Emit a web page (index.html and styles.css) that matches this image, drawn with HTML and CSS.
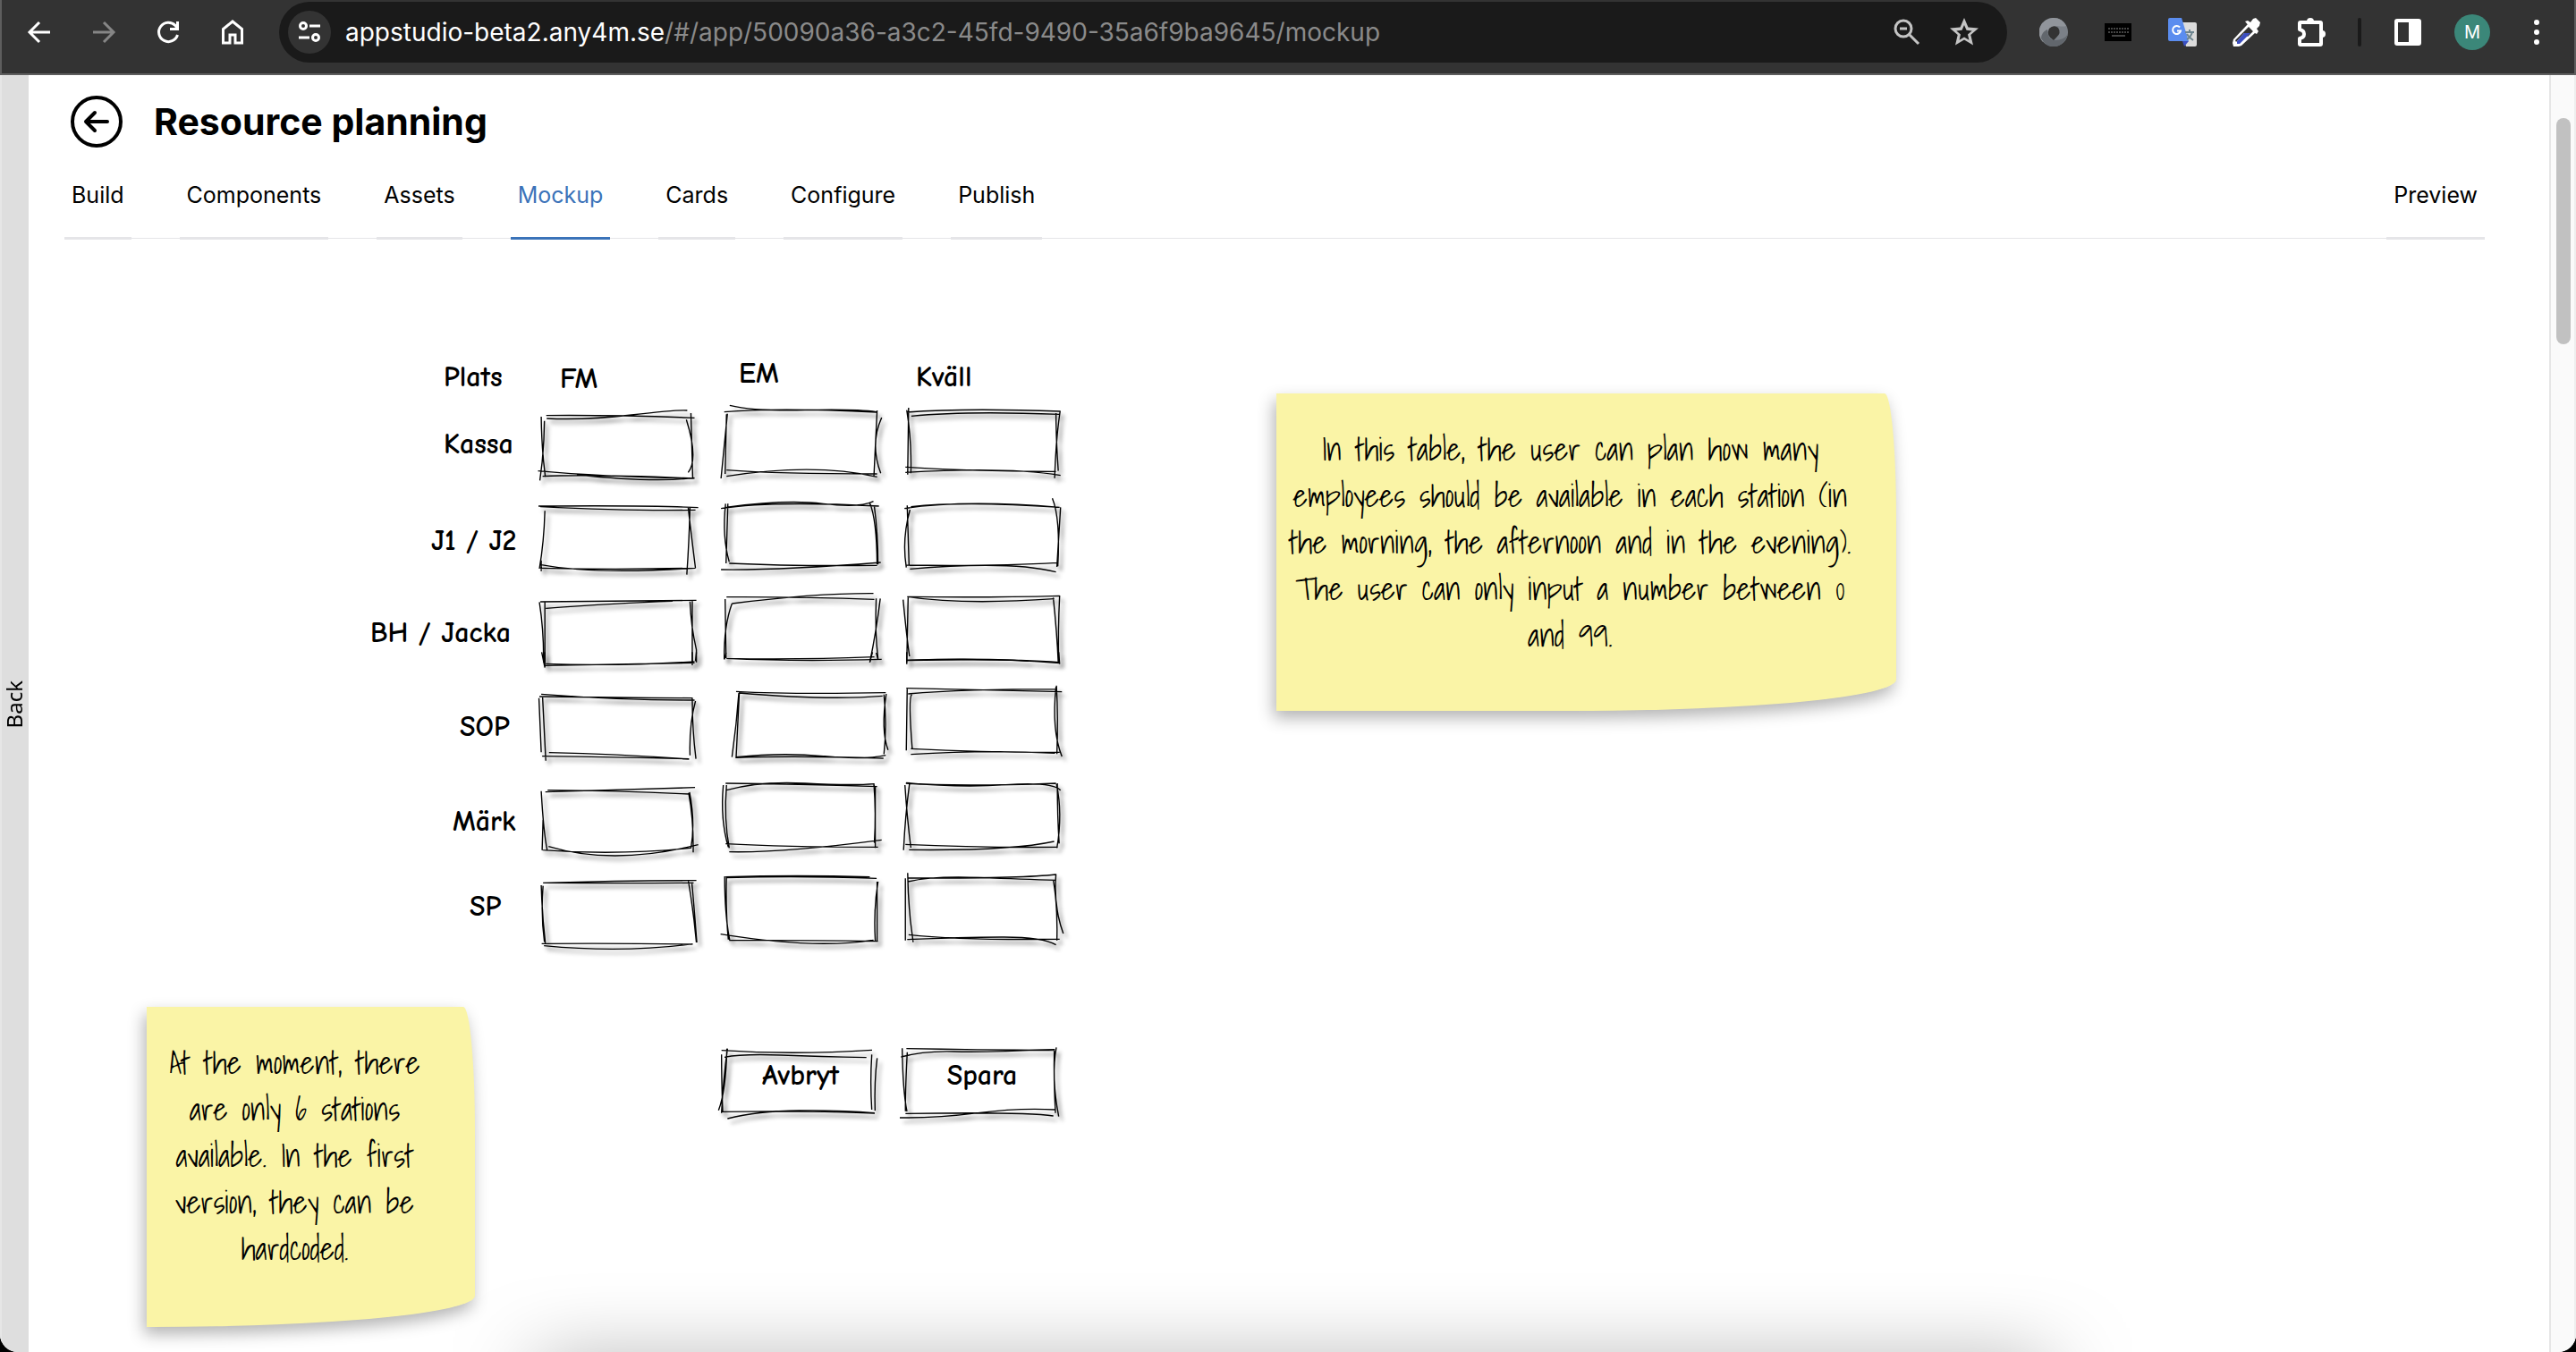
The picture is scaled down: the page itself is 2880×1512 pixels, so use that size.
FILE: index.html
```html
<!DOCTYPE html>
<html lang="en">
<head>
<meta charset="utf-8">
<title>Resource planning</title>
<link rel="stylesheet" href="styles.css">
</head>
<body>
<header class="toolbar">
  <nav class="nav-buttons" aria-label="Browser">
    <button class="icon-btn" aria-label="Back"><svg width="32" height="32" viewBox="0 0 32 32"><path class="line" d="M28 16H6M16 5L5 16l11 11"/></svg></button>
    <button class="icon-btn dim" aria-label="Forward"><svg width="32" height="32" viewBox="0 0 32 32"><path class="line" d="M4 16h22M16 5l11 11-11 11"/></svg></button>
    <button class="icon-btn" aria-label="Reload"><svg width="32" height="32" viewBox="0 0 32 32"><path class="line" d="M26.500 19A10.700 10.700 0 1 1 24 8.500l2 3"/><path class="fill" d="M28 4v10H18v-3h7V4z"/></svg></button>
    <button class="icon-btn" aria-label="Home"><svg width="32" height="32" viewBox="0 0 32 32"><path class="line" d="M5.500 28V12.500L16 4l10.500 8.500V28H19v-9h-6v9z"/></svg></button>
  </nav>
  <div class="address">
    <button class="site-info" aria-label="Site information"><svg width="28" height="28" viewBox="0 0 28 28"><g class="line"><circle cx="7" cy="7" r="3.500"/><path d="M14 7h12M2 20h12"/><circle cx="21" cy="20" r="3.500"/></g></svg></button>
    <p class="url">appstudio-beta2.any4m.se<span>/#/app/50090a36-a3c2-45fd-9490-35a6f9ba9645/mockup</span></p>
    <button class="icon-btn soft" aria-label="Zoom"><svg width="32" height="32" viewBox="0 0 32 32"><g class="line"><circle cx="12" cy="12" r="9"/><path d="M18.500 18.500L29 29M8 12h8"/></g></svg></button>
    <button class="icon-btn soft" aria-label="Bookmark"><svg width="34" height="34" viewBox="0 0 34 34"><path class="fill" fill-rule="evenodd" d="M17 1l4.500 10.500L33 12.500l-8.700 7.600L27 31.500l-10-6-10 6 2.700-11.400L1 12.500l11.500-1zm0 8l-2.500 5.800-6.200.6 4.700 4.100-1.400 6.200 5.400-3.300 5.400 3.300-1.400-6.200 4.700-4.100-6.200-.6z"/></svg></button>
  </div>
  <div class="extensions">
    <button class="icon-btn" aria-label="Ring extension"><svg width="32" height="32" viewBox="0 0 32 32"><circle cx="16" cy="16" r="16" fill="#7b8087"/><path d="M16 0A16 16 0 0 0 4 27Q7 26 9 15q2-6 11-6 8 1 10 0Q26 0 16 0z" fill="#91959b"/><path d="M2 23Q10 36 22 31 30 27 32 18q-4 7-15 7Q9 24 9 13 2 16 2 23z" fill="#62676d"/><path d="M11 12q5-5 10-1 4 6-2 11l-3 3Q7 20 11 12z" fill="#333"/></svg></button>
    <button class="icon-btn" aria-label="Keyboard"><svg width="30" height="20" viewBox="0 0 30 20"><path d="M0 0h30v20H0z" fill="#000"/><path d="M4 6h23M4 10h23" stroke="#444" stroke-width="2" stroke-dasharray="2 1"/><path d="M8 14h15" stroke="#444" stroke-width="2"/></svg></button>
    <button class="icon-btn" aria-label="Translate"><svg width="32" height="32" viewBox="0 0 32 32"><path d="M12 5h18q2 0 2 2v23q0 2-2 2H20z" fill="#dcdcdc"/><path d="M2 0h13l8 26H2q-2 0-2-2V2q0-2 2-2z" fill="#5b8def"/><path d="M16 26h7l-5 6z" fill="#3a50c4"/><path d="M13 10.500a4.500 4.500 0 1 0 1 4h-4" fill="none" stroke="#fff" stroke-width="2"/><path d="M19 16h10M24 13v3M27 16q-2 6-6 8M21 18q2 4 7 7" fill="none" stroke="#6d8590" stroke-width="2"/></svg></button>
    <button class="icon-btn" aria-label="Colour picker"><svg width="32" height="32" viewBox="0 0 32 32"><path d="M17 7l9 9L10 31l-3 1H1l-1-4 1-4z" fill="#fff"/><path d="M18 10l5 5-6 6-4-4-9 10-1-2z" fill="#333"/><path d="M13 17h7L8 29H5v-3z" fill="#3c4fc0"/><path d="M14 4l3-1 3 2 3-4 3-1 5 5-1 4-3 3 2 3-2 3-2-1z" fill="#fff"/></svg></button>
    <button class="icon-btn" aria-label="Extensions"><svg width="36" height="36" viewBox="0 0 36 36"><path fill="none" stroke="#fff" stroke-width="4" stroke-linejoin="round" d="M6 7h22q1 0 1 1v23q0 1-1 1H6q-1 0-1-1v-6q5-1 5-5t-5-5V8q0-1 1-1z"/><path fill="#fff" d="M13 6q0-4 4-4t4 4zM30 16q4 0 4 4t-4 4z"/></svg></button>
    <span class="divider"></span>
    <button class="icon-btn" aria-label="Side panel"><svg width="32" height="32" viewBox="0 0 32 32"><path fill="#fff" fill-rule="evenodd" d="M4 1h24q3 0 3 3v24q0 3-3 3H4q-3 0-3-3V4q0-3 3-3zm1 4v22h12V5z"/></svg></button>
    <button class="avatar">M</button>
    <button class="icon-btn" aria-label="Menu"><svg width="32" height="32" viewBox="0 0 32 32"><g class="fill"><circle cx="16" cy="5" r="3"/><circle cx="16" cy="16" r="3"/><circle cx="16" cy="27" r="3"/></g></svg></button>
  </div>
</header>
<div class="shell">
  <button class="back-strip"><span>Back</span></button>
  <main class="page">
    <div class="title-row">
      <button class="round-back" aria-label="Go back"><svg width="60" height="60" viewBox="0 0 60 60"><g fill="none" stroke="#000" stroke-width="4" stroke-linecap="round" stroke-linejoin="round"><circle cx="30" cy="30" r="27"/><path d="M42 30H18M28 20L18 30l10 10"/></g></svg></button>
      <h1>Resource planning</h1>
    </div>
    <nav class="tabs" aria-label="App sections">
      <a href="#build">Build</a>
      <a href="#components">Components</a>
      <a href="#assets">Assets</a>
      <a href="#mockup" class="active" aria-current="page">Mockup</a>
      <a href="#cards">Cards</a>
      <a href="#configure">Configure</a>
      <a href="#publish">Publish</a>
      <a href="#preview" class="preview">Preview</a>
    </nav>
    <section class="canvas" aria-label="Mockup canvas">
      <svg class="sketch sketch-top" viewBox="0 0 1568 1080" preserveAspectRatio="none" stroke-width="1.400" aria-hidden="true">
        <path d="M413 254Q560 252 738 262M414 264Q500 270 600 252T722 237M402 258Q403 370 411 460M409 272Q408 380 399 472M720 268Q747 400 724 445M730 246L734 465M395 440Q540 460 738 465M405 458Q500 450 738 465M480 453Q650 480 738 463"/>
        <path d="M815 220Q870 240 980 236T1137 242M803 242Q920 226 1137 243M810 248L796 465M808 250L805 450M1138 237L1131 458M1148 261Q1122 350 1146 448M808 458Q1000 412 1138 460M808 437Q920 450 1138 450"/>
        <path d="M1203 243Q1330 228 1540 240M1213 256Q1330 238 1538 250M1207 228L1205 452M1203 236Q1214 340 1212 448M1539 240Q1530 330 1527 464M1530 246Q1530 330 1535 440M1200 427Q1330 440 1530 442M1200 445Q1420 425 1540 455"/>
        <path d="M396 558Q640 555 746 563M400 560Q600 575 740 571M410 574Q408 680 398 768M402 740V776M724 562Q732 670 740 766M728 562Q726 680 721 788M400 766Q560 772 740 766M402 755Q520 788 740 766"/>
        <path d="M796 566Q900 540 1142 558M806 562Q940 535 1020 550T1130 542M806 550Q798 660 814 745M811 550L807 750M1122 548Q1137 600 1138 754M1132 560Q1140 650 1140 754M814 750Q950 760 1138 757M796 771Q920 774 1146 747"/>
        <path d="M1198 566Q1330 535 1538 562M1212 560Q1330 540 1538 562M1204 556L1208 756M1210 570Q1192 670 1202 764M1522 532Q1540 600 1534 760M1540 562L1532 762M1202 756Q1400 760 1532 748M1210 769Q1430 740 1530 779"/>
        <path d="M400 879Q570 876 742 874M412 901Q570 883 690 877M398 880Q408 980 407 1082M410 878V1082M728 878Q730 960 742 1040V1082M733 876V1082"/>
        <path d="M808 863Q980 862 1132 871M820 885Q1000 850 1130 851M805 870L807 1068M820 885Q802 960 803 1072M1136 868Q1133 980 1140 1070M1145 868Q1136 980 1122 1082M808 1069Q960 1080 1148 1072M808 1069Q960 1074 1132 1064"/>
        <path d="M1204 862Q1380 866 1538 859M1206 863Q1330 890 1526 869M1195 872Q1203 1000 1209 1062M1206 863L1203 1082M1524 865Q1532 980 1535 1082M1538 858Q1534 980 1536 1082M1203 1075Q1350 1068 1470 1078"/>
      </svg>
      <svg class="sketch sketch-bottom" viewBox="0 0 1568 1080" preserveAspectRatio="none" stroke-width="1.400" aria-hidden="true">
        <path d="M403 -2L410 50M410 -2V48M742 -2L740 28M733 -2V42M412 37Q560 46 738 30M410 43Q560 38 738 34M803 22L807 0M1136 0L1140 22M1128 -2L1122 32M1203 -2V38M1536 -2L1538 38M1203 25Q1400 15 1538 35M1205 26Q1420 18 1538 32"/>
        <path d="M398 147Q580 151 734 152M402 139Q580 160 738 159M397 152L402 334M405 150L412 362M740 162Q726 240 728 344M733 154Q733 260 741 356M419 335Q570 340 726 357M404 347Q570 350 726 356"/>
        <path d="M829 130Q950 140 1157 134M835 135Q1030 160 1150 145M835 135Q830 240 820 350M836 134L829 354M1153 140Q1160 240 1153 340M1158 138Q1146 260 1162 326M829 352Q960 345 1152 354M829 350Q930 334 1020 347T1157 344"/>
        <path d="M1202 119Q1320 124 1543 131M1206 138Q1330 122 1530 122M1204 118L1202 328M1214 140Q1206 150 1215 322M1531 110Q1535 220 1532 340M1530 114Q1520 260 1543 348M1212 322Q1380 335 1538 334M1212 341Q1380 325 1528 337"/>
        <path d="M411 467Q540 460 739 452M416 461Q560 462 726 474M402 464Q407 600 415 662M406 560L404 662M725 470Q736 560 735 670M727 468Q740 570 730 656M405 662Q570 680 730 655M418 650Q560 715 746 644"/>
        <path d="M806 438Q960 440 1138 449M808 461Q880 430 980 438T1132 440M801 444Q794 560 812 652M808 444Q802 560 814 655M1131 440Q1136 540 1132 638M1134 450V655M806 641Q930 652 1140 652M814 668Q930 672 1148 628"/>
        <path d="M1201 438Q1320 450 1530 438M1202 436Q1320 454 1420 443T1540 461M1199 444Q1204 560 1212 654M1209 440Q1200 540 1196 662M1531 440Q1545 540 1532 656M1533 438Q1533 550 1537 640M1200 643Q1350 654 1534 652M1208 661Q1430 665 1526 633"/>
        <path d="M406 772Q570 765 742 764M408 772Q570 774 736 772M402 780Q404 880 411 974M406 782Q401 880 409 970M724 762Q736 870 742 972M732 770Q738 870 743 972M403 976Q570 974 734 978M408 983Q580 1008 734 977"/>
        <path d="M806 752Q960 745 1122 752M808 755Q960 747 1137 757M804 750Q804 880 815 964M808 752Q806 870 812 962M1140 768Q1130 860 1134 966M1138 768V968M795 944Q1000 995 1130 964M814 965Q960 964 1140 968"/>
        <path d="M1205 756Q1460 757 1529 744M1206 768Q1260 748 1360 754T1530 763M1200 757L1200 965M1205 739Q1206 860 1217 971M1530 742Q1524 850 1546 942M1524 762Q1534 850 1532 966M1207 946Q1320 965 1538 961M1204 962Q1320 955 1410 954T1530 980"/>
      </svg>
      <svg class="sketch sketch-buttons" viewBox="0 0 1320 420" preserveAspectRatio="none" stroke-width="1.400" aria-hidden="true">
        <path d="M80 104Q320 120 585 103M90 127Q150 115 280 120T566 128M80 118Q80 200 84 308M100 98Q86 200 80 314M98 98Q95 240 70 305M584 118Q578 210 584 303M602 130Q592 210 595 306M80 310Q360 306 594 315M100 333Q200 308 340 306T592 314"/>
        <path d="M700 98Q930 102 1198 104M682 126Q760 105 860 108T1198 101M686 97Q688 240 702 309M703 110Q696 240 697 308M1203 94Q1185 190 1211 326M1196 104Q1194 200 1200 314M678 330Q800 332 940 314T1198 303M697 316Q1100 310 1193 324"/>
      </svg>

      <span class="label head-plats">Plats</span>
      <span class="label head-fm">FM</span>
      <span class="label head-em">EM</span>
      <span class="label head-kvall">Kväll</span>

      <span class="label name-kassa">Kassa</span>
      <span class="label name-j">J1 / J2</span>
      <span class="label name-bh">BH / Jacka</span>
      <span class="label name-sop">SOP</span>
      <span class="label name-mark">Märk</span>
      <span class="label name-sp">SP</span>

      <input class="field col-fm row-1" aria-label="Kassa FM"><input class="field col-em row-1" aria-label="Kassa EM"><input class="field col-kvall row-1" aria-label="Kassa Kväll">
      <input class="field col-fm row-2" aria-label="J1 / J2 FM"><input class="field col-em row-2" aria-label="J1 / J2 EM"><input class="field col-kvall row-2" aria-label="J1 / J2 Kväll">
      <input class="field col-fm row-3" aria-label="BH / Jacka FM"><input class="field col-em row-3" aria-label="BH / Jacka EM"><input class="field col-kvall row-3" aria-label="BH / Jacka Kväll">
      <input class="field col-fm row-4" aria-label="SOP FM"><input class="field col-em row-4" aria-label="SOP EM"><input class="field col-kvall row-4" aria-label="SOP Kväll">
      <input class="field col-fm row-5" aria-label="Märk FM"><input class="field col-em row-5" aria-label="Märk EM"><input class="field col-kvall row-5" aria-label="Märk Kväll">
      <input class="field col-fm row-6" aria-label="SP FM"><input class="field col-em row-6" aria-label="SP EM"><input class="field col-kvall row-6" aria-label="SP Kväll">

      <button class="action col-em">Avbryt</button>
      <button class="action col-kvall">Spara</button>

      <p class="note note-table">In this table, the user can plan how many<br>employees should be available in each station (in<br>the morning, the afternoon and in the evening).<br>The user can only input a number between 0<br>and 99.</p>
      <p class="note note-stations">At the moment, there<br>are only 6 stations<br>available. In the first<br>version, they can be<br>hardcoded.</p>
      <div class="drawer"></div>
    </section>
  </main>
  <div class="scrollbar"><div class="thumb"></div></div>
</div>
</body>
</html>
```
FILE: styles.css
```css
* { box-sizing: border-box; }

html { background: #000; }

body {
  margin: 0;
  height: 100vh;
  display: flex;
  flex-direction: column;
  overflow: hidden;
  border-radius: 0 0 20px 20px;
  background: #fff;
  color: #000;
  font-family: Inter, "Liberation Sans", sans-serif;
}

button {
  padding: 0;
  border: 0;
  background: none;
  color: inherit;
  font: inherit;
}

svg { display: block; }

/* Browser toolbar */
.toolbar {
  flex: none;
  display: flex;
  align-items: flex-start;
  height: 84px;
  padding: 2px 22px 0 6px;
  border-bottom: 2px solid #5e5e5e;
  border-left: 2px solid #5e5e5e;
  border-right: 2px solid #5e5e5e;
  background: #333;
  color: #fff;
}

.nav-buttons {
  display: flex;
  align-items: center;
  height: 68px;
  margin-right: 16px;
}

.icon-btn {
  display: grid;
  place-items: center;
  width: 72px;
  height: 68px;
}

.icon-btn.dim { color: #868686; }
.icon-btn.soft { width: 64px; color: #c4c4c4; }

.line {
  fill: none;
  stroke: currentColor;
  stroke-width: 3;
}

.fill { fill: currentColor; }

.address {
  flex: 1;
  display: flex;
  align-items: center;
  height: 68px;
  padding: 0 16px 0 10px;
  border-radius: 34px;
  background: #1a1a1a;
}

.site-info {
  display: grid;
  place-items: center;
  width: 48px;
  height: 48px;
  border-radius: 50%;
  background: #333;
}

.url {
  flex: 1;
  margin: 0 0 0 16px;
  font-size: 28px;
  white-space: nowrap;
}

.url span { color: #8a8a8a; }

.extensions {
  display: flex;
  align-items: center;
  height: 68px;
  margin-left: 16px;
}

.divider {
  width: 4px;
  height: 32px;
  margin: 0 16px;
  border-radius: 2px;
  background: #1a1a1a;
}

.avatar {
  width: 40px;
  height: 40px;
  margin: 0 16px;
  border-radius: 50%;
  background: #3b8779;
  font-size: 20px;
}

.extensions .icon-btn:last-child { width: 40px; margin-left: 16px; }

/* Page frame */
.shell {
  flex: 1;
  display: flex;
  min-height: 0;
}

.back-strip {
  display: flex;
  align-items: center;
  justify-content: center;
  width: 32px;
  padding: 0 4px 20px 0;
  border-left: 2px solid #e6e6e6;
  background: #dedede;
  font-family: "Noto Sans", sans-serif;
  font-size: 24px;
}

.back-strip span {
  writing-mode: vertical-rl;
  transform: rotate(180deg);
}

.page {
  flex: 1;
  display: flex;
  flex-direction: column;
  min-width: 0;
}

.title-row {
  display: flex;
  align-items: center;
  gap: 34px;
  padding: 22px 0 0 46px;
}

h1 {
  margin: 0;
  font-size: 41px;
  font-weight: 700;
  line-height: 60px;
}

.tabs {
  position: relative;
  display: flex;
  gap: 54px;
  margin: 32px 72px 0 40px;
  height: 70px;
}

.tabs::before {
  content: "";
  position: absolute;
  left: 0;
  right: 0;
  bottom: 1px;
  height: 1px;
  background: #e5e5e8;
}

.tabs a {
  position: relative;
  padding: 0 8px;
  border-bottom: 3px solid #e5e5e8;
  color: #000;
  font-size: 25px;
  line-height: 40px;
  text-decoration: none;
}

.tabs .active {
  border-color: #3b73b9;
  color: #3b73b9;
}

.tabs .preview { margin-left: auto; }

.scrollbar {
  width: 30px;
  padding: 48px 4px 0 6px;
  border-left: 2px solid #e6e6e6;
  border-right: 2px solid #eee;
  background: #fafafa;
}

.thumb {
  width: 16px;
  height: 253px;
  border-radius: 8px;
  background: #c1c1c1;
}

/* Free canvas: every mockup element sits where it was dropped */
.canvas {
  position: relative;
  flex: 1;
  overflow: hidden;
}

.sketch {
  position: absolute;
  overflow: visible;
  fill: none;
  stroke: #000;
  filter: drop-shadow(4px 5px 2px rgba(0, 0, 0, .4));
}

.sketch path { vector-effect: non-scaling-stroke; }

.sketch-top { left: 368px; top: 112px; width: 800px; height: 360px; }
.sketch-bottom { left: 368px; top: 462px; width: 800px; height: 360px; }
.sketch-buttons { left: 748px; top: 872px; width: 440px; height: 140px; }

.label,
.action {
  position: absolute;
  font-family: "Comic Neue", "Open Sans", sans-serif;
  font-size: 32px;
  font-weight: 600;
  line-height: 40px;
  white-space: nowrap;
}

.head-plats { left: 464px; top: 134px; }
.head-fm { left: 594px; top: 136px; }
.head-em { left: 794px; top: 130px; }
.head-kvall { left: 992px; top: 134px; }
.name-kassa { left: 464px; top: 209px; }
.name-j { left: 450px; top: 317px; }
.name-bh { left: 382px; top: 420px; }
.name-sop { left: 482px; top: 525px; }
.name-mark { left: 474px; top: 631px; }
.name-sp { left: 493px; top: 726px; }

.field {
  position: absolute;
  width: 160px;
  height: 56px;
  padding: 0 12px;
  border: 0;
  background: transparent;
  font-size: 32px;
}

.col-fm { left: 580px; }
.col-em { left: 783px; }
.col-kvall { left: 986px; }
.row-1 { top: 202px; }
.row-2 { top: 307px; }
.row-3 { top: 411px; }
.row-4 { top: 516px; }
.row-5 { top: 621px; }
.row-6 { top: 726px; }

.action {
  top: 907px;
  width: 160px;
  height: 64px;
  padding-bottom: 8px;
}

.note {
  position: absolute;
  margin: 0;
  padding: 36px 40px 0 4px;
  border-radius: 0 13px 360px 0 / 0 140px 35px 0;
  background: #faf4a6;
  box-shadow: -3px 8px 18px rgba(0, 0, 0, .3);
  font-family: "Shadows Into Light", "Liberation Sans Narrow", "Liberation Sans", sans-serif;
  font-size: 35px;
  line-height: 52px;
  text-align: center;
  white-space: nowrap;
}

.note-table { left: 1395px; top: 172px; width: 693px; height: 355px; }
.note-stations { left: 132px; top: 858px; width: 367px; height: 358px; }

.drawer {
  position: absolute;
  left: 568px;
  right: 560px;
  bottom: -60px;
  height: 40px;
  box-shadow: 0 0 90px rgba(0, 0, 0, .5);
}
```
